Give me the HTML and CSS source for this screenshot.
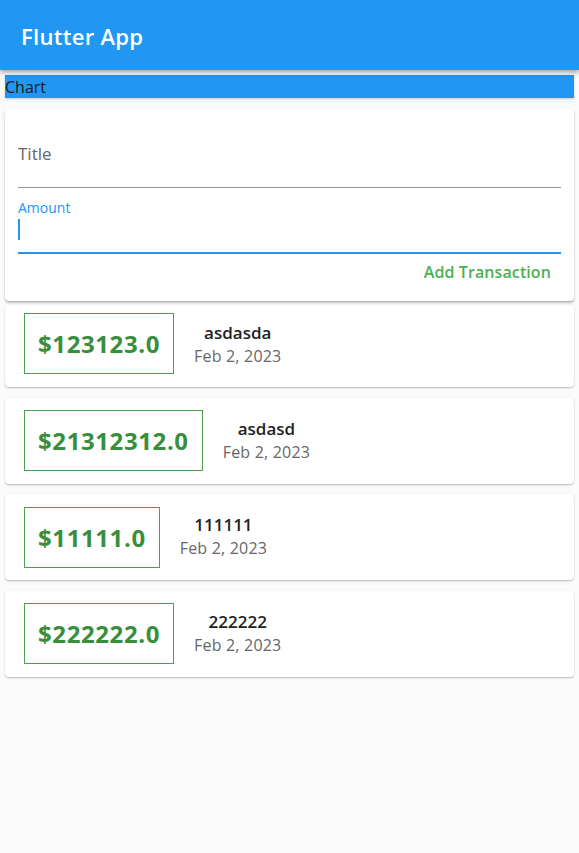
FILE: index.html
```html
<!DOCTYPE html>
<html>
<head>
<meta charset="utf-8">
<link rel="stylesheet" href="styles.css">
</head>
<body>
<header class="appbar"><h1 class="appbar-title">Flutter App</h1></header>
<main class="content">
  <div class="chart">Chart</div>
  <section class="input-card">
    <div class="field">
      <div class="field-placeholder">Title</div>
    </div>
    <div class="field field-focused">
      <div class="field-label">Amount</div>
      <div class="field-input"><span class="cursor"></span></div>
    </div>
    <div class="actions"><button class="add-btn">Add Transaction</button></div>
  </section>
  <ul class="tx-list">
    <li class="tx-card tx-first">
      <div class="tx-amount">$123123.0</div>
      <div class="tx-info"><div class="tx-title">asdasda</div><div class="tx-date">Feb 2, 2023</div></div>
    </li>
    <li class="tx-card">
      <div class="tx-amount">$21312312.0</div>
      <div class="tx-info"><div class="tx-title">asdasd</div><div class="tx-date">Feb 2, 2023</div></div>
    </li>
    <li class="tx-card">
      <div class="tx-amount">$11111.0</div>
      <div class="tx-info"><div class="tx-title">111111</div><div class="tx-date">Feb 2, 2023</div></div>
    </li>
    <li class="tx-card">
      <div class="tx-amount">$222222.0</div>
      <div class="tx-info"><div class="tx-title">222222</div><div class="tx-date">Feb 2, 2023</div></div>
    </li>
  </ul>
</main>
</body>
</html>
```
FILE: styles.css
```css
* { box-sizing: border-box; }
html, body { margin: 0; padding: 0; }
body {
  background: #fafafa;
  font-family: "Open Sans", "Noto Sans", sans-serif;
  width: 579px;
  height: 853px;
  overflow: hidden;
}
.appbar {
  height: 70px;
  background: #2196f3;
  display: flex;
  align-items: center;
  padding-left: 21px;
  padding-top: 2px;
  box-shadow: 0 2px 4px rgba(0,0,0,0.25), 0 4px 5px rgba(0,0,0,0.1);
  position: relative;
  z-index: 2;
}
.appbar-title {
  margin: 0;
  color: #fff;
  font-size: 22px;
  font-weight: 600;
  letter-spacing: 0.3px;
}
.content { padding: 5px 5px 0; }
.chart {
  height: 23px;
  background: #2196f3;
  color: #1a1a1a;
  font-size: 16px;
  line-height: 24px;
  box-shadow: 0 1px 2px rgba(0,0,0,0.2);
}
.input-card {
  margin-top: 11px;
  height: 192px;
  background: #fff;
  border-radius: 4px;
  box-shadow: 0 2px 3px rgba(0,0,0,0.22), 0 1px 1px rgba(0,0,0,0.12);
  padding: 0 13px;
  display: flex;
  flex-direction: column;
  position: relative;
  z-index: 1;
}
.field {
  border-bottom: 1px solid #949494;
  height: 79px;
  display: flex;
  align-items: flex-end;
  padding-bottom: 21px;
}
.field-placeholder { color: #666; font-size: 17px; line-height: 24px; }
.field-focused {
  height: 66px;
  border-bottom: 2px solid #2196f3;
  flex-direction: column;
  align-items: flex-start;
  justify-content: flex-end;
  padding-bottom: 11px;
}
.field-label { color: #2196f3; font-size: 14px; line-height: 18px; }
.field-input { height: 22px; margin-top: 2px; display: flex; }
.cursor { width: 2px; height: 21px; background: #2196f3; }
.actions { display: flex; justify-content: flex-end; padding-top: 7px; padding-right: 10px; }
.add-btn {
  border: 0;
  background: none;
  padding: 0;
  font-family: inherit;
  color: #4caf50;
  font-size: 16px;
  font-weight: 600;
  line-height: 22px;
  letter-spacing: 0.1px;
}
.tx-list { list-style: none; margin: 0; padding: 0; }
.tx-card {
  background: #fff;
  border-radius: 4px;
  box-shadow: 0 1px 2px rgba(0,0,0,0.2), 0 1px 1px rgba(0,0,0,0.08);
  height: 86px;
  margin-top: 10.5px;
  display: flex;
  align-items: center;
  padding-left: 19px;
}
.tx-first { margin-top: 4px; height: 82px; align-items: flex-start; }
.tx-first .tx-amount { margin-top: 8px; }
.tx-first .tx-info { margin-top: 17px; }
.tx-amount {
  border: 1px solid #4f9f53;
  height: 61px;
  padding: 0 13px;
  display: flex;
  align-items: center;
  color: #388e3c;
  font-size: 24px;
  font-weight: 700;
  letter-spacing: 0.6px;
}
.tx-info {
  margin-left: 20px;
  display: flex;
  flex-direction: column;
  align-items: center;
}
.tx-title { color: #222; font-size: 17px; font-weight: 600; line-height: 22px; }
.tx-date { color: #666; font-size: 16px; line-height: 24px; letter-spacing: 0.2px; }
```
